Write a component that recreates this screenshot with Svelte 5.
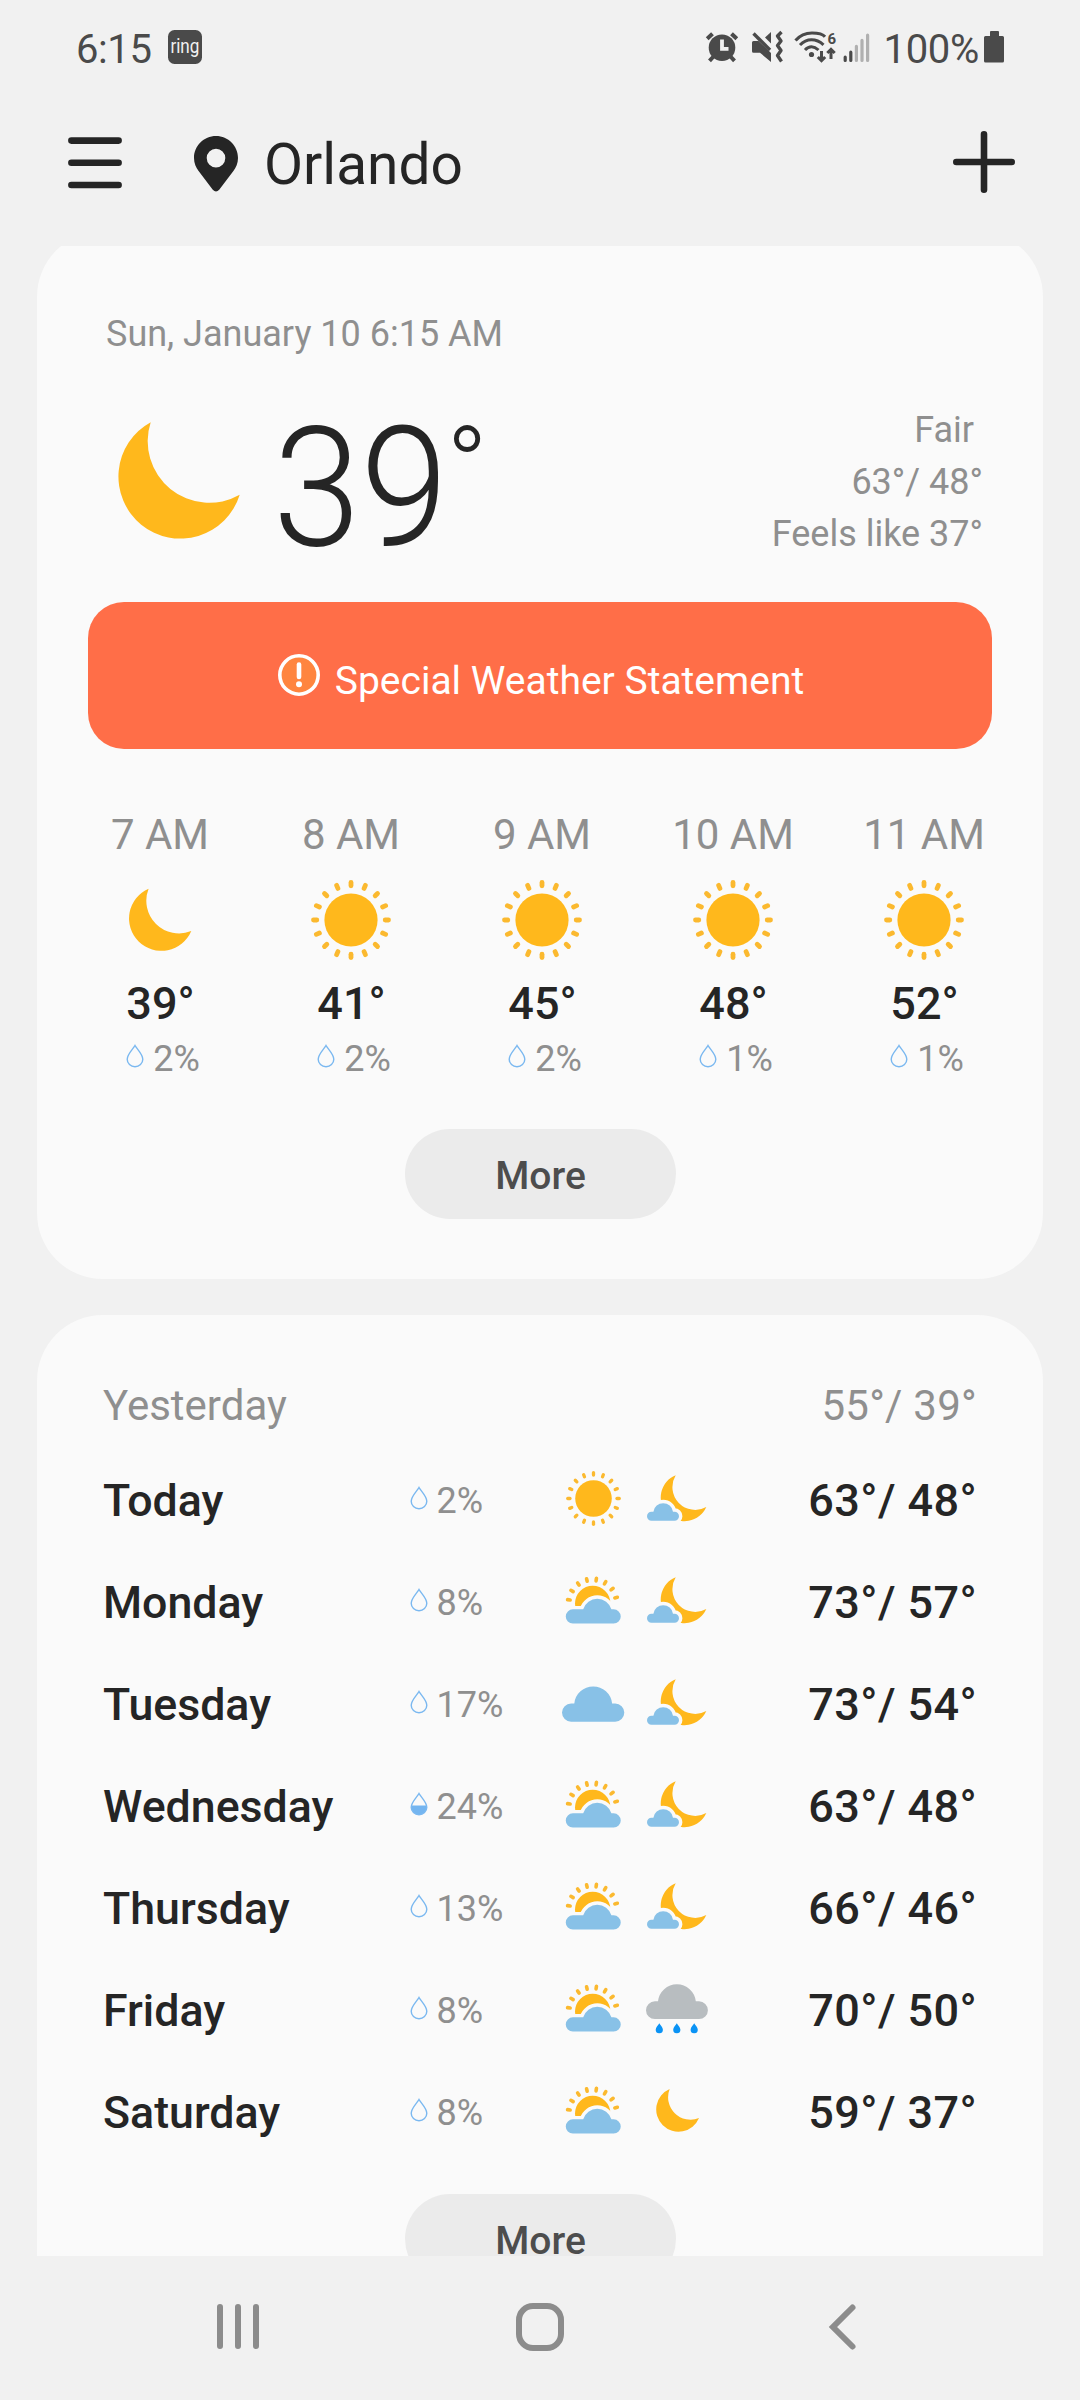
<script>
  // Hourly strip: label, icon, temperature, chance of rain
  const hours = [
    { label: '7 AM', icon: 'moon', temp: 39, pop: 2 },
    { label: '8 AM', icon: 'sun', temp: 41, pop: 2 },
    { label: '9 AM', icon: 'sun', temp: 45, pop: 2 },
    { label: '10 AM', icon: 'sun', temp: 48, pop: 1 },
    { label: '11 AM', icon: 'sun', temp: 52, pop: 1 },
  ];

  const days = [
    { name: 'Today', pop: 2, day: 'sun', night: 'moonCloud', hi: 63, lo: 48 },
    { name: 'Monday', pop: 8, day: 'sunCloud', night: 'moonCloud', hi: 73, lo: 57 },
    { name: 'Tuesday', pop: 17, day: 'cloud', night: 'moonCloud', hi: 73, lo: 54 },
    { name: 'Wednesday', pop: 24, day: 'sunCloud', night: 'moonCloud', hi: 63, lo: 48 },
    { name: 'Thursday', pop: 13, day: 'sunCloud', night: 'moonCloud', hi: 66, lo: 46 },
    { name: 'Friday', pop: 8, day: 'sunCloud', night: 'rain', hi: 70, lo: 50 },
    { name: 'Saturday', pop: 8, day: 'sunCloud', night: 'moon', hi: 59, lo: 37 },
  ];

  const rays = Array.from({ length: 16 }, (_, i) => i * 22.5);
  const halfRays = Array.from({ length: 8 }, (_, i) => -81.5 + i * 22.5);
  const rainX = [15.3, 32.8, 50.2];

  // the drop is half filled from 20% up
  const HALF_DROP = 20;
</script>

{#snippet drop(pop)}
  <svg class="drop" width="18" height="24" viewBox="0 0 18 24">
    {#if pop >= HALF_DROP}
      <path class="drop-fill" d="M1.2 13.5H16.8V15A7.8 7.8 0 0 1 1.2 15Z" />
    {/if}
    <path class="drop-line" d="M9 1.5C7.2 4.8 1.2 10.4 1.2 15.2a7.8 7.6 0 0 0 15.6 0C16.8 10.4 10.8 4.8 9 1.5Z" />
  </svg>
{/snippet}

{#snippet round(icon, size)}
  <svg width={size} height={size} viewBox="0 0 80 80">
    {#if icon === 'sun'}
      <circle class="gold" cx="40" cy="40" r="26.6" />
      {#each rays as a}
        <path class="ray" stroke-width="4.8" d="M40 2.5V5.8" transform="rotate({a} 40 40)" />
      {/each}
    {:else}
      <path class="gold" d="M28.6 8.7A32.7 32.7 0 0 0 71.3 51A32.4 32.4 0 1 1 28.6 8.7Z" />
    {/if}
  </svg>
{/snippet}

{#snippet weather(icon)}
  {#if icon === 'sun' || icon === 'moon'}
    {@render round(icon, 55)}
  {:else}
    <svg width="66" height="54" viewBox="0 0 66 54">
      {#if icon === 'sunCloud'}
        <circle class="gold" cx="32.7" cy="30.4" r="17.7" />
        {#each halfRays as a}
          <path class="ray" stroke-width="3.6" d="M32.7 5V7.6" transform="rotate({a} 32.7 30.4)" />
        {/each}
        <path class="sky gap" d="M12.9 50.6a7.15 7.15 0 0 1 0-14.3H23.2A14.7 14.7 0 0 1 51.4 36.3H53.6a7.15 7.15 0 0 1 0 14.3Z" />
      {:else if icon === 'moonCloud'}
        <path class="gold" d="M31.7 4.3A22.8 22.8 0 0 0 62.3 36A23.8 23.8 0 1 1 31.7 4.3Z" />
        <path class="sky gap" d="M7.5 49.7a4.5 4.5 0 0 1 0-9H9.4A9.9 9.9 0 0 1 29 40.7H30.5a4.5 4.5 0 0 1 0 9Z" />
      {:else if icon === 'cloud'}
        <path class="sky" d="M11.1 46.7a9.1 9.1 0 0 1 0-18.2H14.3A19 19 0 0 1 52.1 28.5H55.2a9.1 9.1 0 0 1 0 18.2Z" />
      {:else}
        <path class="grey" d="M10.9 38.1a8.9 8.9 0 0 1 0-17.8H14A19 19 0 0 1 51.8 20.3H55a8.9 8.9 0 0 1 0 17.8Z" />
        {#each rainX as x}
          <path class="rain" d="M{x} 42.2c-1 2-3.6 4-3.6 6.5a3.6 3.6 0 0 0 7.2 0c0-2.5-2.6-4.5-3.6-6.5Z" />
        {/each}
      {/if}
    </svg>
  {/if}
{/snippet}

<div class="phone">
  <div class="status">
    <span class="clock">6:15</span>
    <svg class="ring" width="34" height="34" viewBox="0 0 34 34">
      <rect width="34" height="34" rx="6.5" fill="#4a4a4a" />
      <text x="2.4" y="22.8" textLength="29" lengthAdjust="spacingAndGlyphs">ring</text>
    </svg>

    <svg class="tray" width="168" height="36" viewBox="704 29 168 36">
      <!-- alarm -->
      <g class="ink">
        <circle cx="722" cy="47.7" r="13.3" />
        <path class="line" stroke-width="4" d="M707.2 38.8L712.5 33.7M736.8 38.8L731.5 33.7" />
        <path class="line" stroke-width="4" d="M713.5 56.5L709.5 60.8M730.5 56.5L734.5 60.8" />
        <path d="M722 39.5V48.8H728.5" fill="none" stroke="#f1f1f1" stroke-width="3.8" />
      </g>
      <!-- sound off, vibrate -->
      <g class="ink">
        <path d="M752 42.5Q752 41 753.5 41H758.5L771 53V62L760 52.7H753.5Q752 52.7 752 51.2Z" />
        <path d="M771 32V43.5L765 37.5Z" />
        <path class="line" stroke-width="3.4" d="M753.5 33.5L770 50" />
        <path class="line" stroke-width="3.4" stroke-linejoin="round" d="M781.5 32L777.5 36L781 41L777.5 45.5L781 50.5L777.5 55.5L781.5 61.5" />
      </g>
      <!-- wifi 6 -->
      <g class="ink">
        <path class="line" stroke-width="3" d="M795.5 40.5Q802 33 812 33T825 36.8" />
        <path class="line" stroke-width="3" d="M800 45Q805 39.8 811.5 39.8T823.5 44.8" />
        <path class="line" stroke-width="3" d="M805 50Q808 46.8 811.5 46.8T818.5 50" />
        <circle cx="811.5" cy="54.5" r="2.6" />
        <path class="line" stroke-width="3" d="M821.5 51V60M817.8 57L821.5 60.7L825.2 57" />
        <path class="line" stroke-width="3" d="M831 59V50M827.3 53L831 49.3L834.7 53" />
        <text class="gen" x="827.4" y="43.5">6</text>
      </g>
      <!-- signal: two of five bars -->
      <path class="line" stroke-width="3.2" stroke-linecap="round" d="M845.2 57.2V60.5M850.8 52.2V60.5" />
      <path class="line faint" stroke-width="3.2" stroke-linecap="round" d="M856.4 46.4V60.5M862 40.4V60.5M867.6 35.2V60.5" />
    </svg>
    <span class="charge">100%</span>
    <svg width="20" height="32" viewBox="0 0 20 32">
      <path class="ink" d="M6 1Q6 0 7 0H14Q15 0 15 1V5H18.5Q20 5 20 6.5V30Q20 31.5 18.5 31.5H1.5Q0 31.5 0 30V6.5Q0 5 1.5 5H6Z" />
    </svg>
  </div>

  <header class="bar">
    <svg width="54" height="52" viewBox="0 0 54 52">
      <path class="stroke" d="M3.4 3.6H50.6M3.4 25.8H50.6M3.4 48H50.6" />
    </svg>
    <svg class="pin" width="44" height="56" viewBox="0 0 44 56">
      <path fill="#252525" fill-rule="evenodd" d="M22 0C9.8 0 0 9.8 0 22C0 27.5 2 31.3 4.6 35L18.8 53.8Q22 57.2 25.2 53.8L39.4 35C42 31.3 44 27.5 44 22C44 9.8 34.2 0 22 0ZM22 12.8a9.3 9.3 0 1 1 0 18.6a9.3 9.3 0 0 1 0-18.6Z" />
    </svg>
    <h1>Orlando</h1>
    <svg class="plus" width="62" height="62" viewBox="0 0 62 62">
      <path class="stroke" d="M31 3.3V58.7M3.3 31H58.7" />
    </svg>
  </header>

  <main>
    <section class="card now">
      <div class="date">Sun, January 10 6:15 AM</div>
      <div class="current">
        <svg width="122" height="117" viewBox="0 0 122 117">
          <path class="gold" d="M32.7 .2A61.6 61.6 0 0 0 121.7 72.8A62 62 0 1 1 32.7 .2Z" />
        </svg>
        <div class="big">39</div>
        <div class="deg">°</div>
        <div class="detail">
          <div>Fair&nbsp;</div>
          <div>63°/ 48°</div>
          <div>Feels like 37°</div>
        </div>
      </div>

      <div class="alert">
        <svg width="42" height="42" viewBox="0 0 42 42">
          <circle cx="21" cy="21" r="19.2" fill="#ff853f" stroke="#fff" stroke-width="3.6" />
          <path d="M21 10.5V23" stroke="#fff" stroke-width="4.6" stroke-linecap="round" />
          <circle cx="21" cy="30.3" r="3" fill="#fff" />
        </svg>
        <span>Special Weather Statement</span>
      </div>

      <div class="hours">
        {#each hours as h}
          <div class="hour">
            <div class="label">{h.label}</div>
            {@render round(h.icon, 80)}
            <div class="temp">{h.temp}°</div>
            <div class="pop">{@render drop(h.pop)}{h.pop}%</div>
          </div>
        {/each}
      </div>
      <button class="more">More</button>
    </section>

    <section class="card week">
      <div class="yesterday"><span>Yesterday</span><span class="range">55°/ 39°</span></div>
      {#each days as d}
        <div class="day">
          <span class="name">{d.name}</span>
          <span class="pop">{@render drop(d.pop)}{d.pop}%</span>
          <span class="icon">{@render weather(d.day)}</span>
          <span class="icon">{@render weather(d.night)}</span>
          <span class="range">{d.hi}°/ {d.lo}°</span>
        </div>
      {/each}
      <button class="more">More</button>
    </section>
  </main>

  <nav>
    <svg width="48" height="48" viewBox="0 0 48 48">
      <path d="M6 4V43M24 4V43M42 4V43" />
    </svg>
    <svg width="48" height="48" viewBox="0 0 48 48">
      <rect x="3" y="3" width="42" height="42" rx="14" />
    </svg>
    <svg width="48" height="48" viewBox="0 0 48 48">
      <path d="M34.5 4.5L15 24L34.5 43.5" />
    </svg>
  </nav>
</div>

<style>
  :global(body) { background: #f1f1f1; }

  .phone {
    width: 1080px;
    height: 2400px;
    display: flex;
    flex-direction: column;
    background: #f1f1f1;
    color: #252525;
    font-family: Roboto, sans-serif;
    overflow: hidden;
  }
  svg { display: block; flex: none; }

  /* icon paint */
  .gold { fill: #ffb81c; }
  .ray { stroke: #fbb92f; stroke-linecap: round; }
  .sky { fill: #88c1e7; }
  .grey { fill: #b8bdc0; }
  .rain { fill: #0a93f5; }
  .gap { stroke: #fafafa; stroke-width: 6.8px; paint-order: stroke; }
  .drop-line { fill: none; stroke: #7ab8f0; stroke-width: 1.4px; }
  .drop-fill { fill: #74b5f0; }
  .ink { fill: #4a4a4a; }
  .line { fill: none; stroke: #4a4a4a; }
  .faint { stroke: #b0b0b0; }
  .stroke { fill: none; stroke: #252525; stroke-width: 6.6px; stroke-linecap: round; }

  .status {
    height: 98px;
    padding: 0 76px;
    display: flex;
    align-items: center;
    box-sizing: border-box;
    font-size: 40px;
    color: #4a4a4a;
  }
  .clock { letter-spacing: -0.4px; }
  .ring { margin: 0 auto 4px 16px; overflow: visible; }
  .ring text { font-size: 21px; fill: #f1f1f1; }
  .gen { font-size: 15px; font-weight: 700; }
  .tray { margin-bottom: 4px; }
  .charge { margin: 0 5px 0 11px; letter-spacing: -0.3px; }
  .charge + svg { margin-bottom: 4px; }

  .bar {
    height: 129px;
    margin-bottom: 19px;
    padding: 0 65px 0 68px;
    display: flex;
    align-items: center;
  }
  .pin { margin: 2px 26px 0 72px; }
  h1 { margin: 4px 0 0; font-size: 56.8px; font-weight: 400; line-height: 70px; }
  .plus { margin: 0 0 1px auto; }

  main {
    height: 2010px;
    padding: 0 37px;
    overflow: hidden;
  }
  .card {
    background: #fafafa;
    border-radius: 66px;
    display: flow-root;
  }

  /* scrolled a little under the header */
  .now { height: 1048px; margin-top: -15px; }
  .date {
    margin: 81px 0 0 69px;
    font-size: 36px;
    line-height: 44px;
    color: #8f8f8f;
  }
  .current {
    height: 156px;
    margin-top: 48px;
    padding: 0 60px 0 81px;
    display: flex;
    align-items: center;
  }
  .current > svg { margin-bottom: 4px; }
  .big {
    margin: 0 -12px 0 33px;
    padding-top: 12px;
    font-size: 167px;
    font-weight: 300;
    line-height: 156px;
    transform: scaleX(0.945);
    transform-origin: left;
  }
  .deg {
    align-self: flex-start;
    margin-top: 8px;
    font-size: 110px;
    font-weight: 300;
    line-height: 110px;
  }
  .detail {
    margin-left: auto;
    font-size: 36px;
    line-height: 52px;
    text-align: right;
    color: #8f8f8f;
  }

  .alert {
    height: 147px;
    margin: 42px 51px 0;
    padding-left: 2px;
    border-radius: 36px;
    display: flex;
    align-items: center;
    justify-content: center;
    gap: 15px;
    background: #ff6e48;
    color: #fff;
    font-size: 39px;
  }
  .alert svg { margin-bottom: 1px; }
  .alert span { padding-top: 11px; }

  .hours {
    display: flex;
    margin: 61px 0 49px 27px;
  }
  .hour {
    width: 191px;
    display: flex;
    flex-direction: column;
    align-items: center;
  }
  .label {
    margin-bottom: 20px;
    padding-left: 1px;
    font-size: 42px;
    line-height: 50px;
    color: #8f8f8f;
  }
  .temp {
    margin: 18px 0 8px;
    padding-left: 2px;
    font-size: 45px;
    font-weight: 500;
    line-height: 52px;
  }
  .pop {
    display: flex;
    align-items: center;
    gap: 9px;
    font-size: 36px;
    font-weight: 400;
    line-height: 42px;
    color: #8f8f8f;
  }
  .hour .pop { padding-left: 7px; }
  .drop { margin-bottom: 6px; }

  .more {
    display: block;
    width: 271px;
    height: 90px;
    margin: 0 auto;
    padding: 4px 0 0 1px;
    border: none;
    border-radius: 45px;
    background: #ebebeb;
    color: #4d4d4d;
    font: 500 39px Roboto, sans-serif;
  }

  .week {
    height: 1100px;
    margin-top: 36px;
    padding: 47px 66px 0;
  }
  .yesterday {
    height: 87px;
    display: flex;
    align-items: center;
    justify-content: space-between;
    font-size: 42px;
    color: #8f8f8f;
  }
  .day {
    height: 102px;
    display: grid;
    grid-template-columns: 307px 150px 66px 84px 1fr;
    align-items: center;
    font-size: 45px;
    font-weight: 500;
  }
  .name { padding-top: 2px; font-size: 44.7px; }
  .day .pop { padding-top: 2px; gap: 8.5px; }
  .icon {
    display: flex;
    justify-content: center;
    padding-bottom: 4px;
  }
  .icon + .icon { padding-left: 18px; }
  .range { text-align: right; letter-spacing: 0.4px; }
  .yesterday .range { letter-spacing: 0.25px; }
  .week .more { margin-top: 31px; }

  nav {
    flex: 1;
    padding: 0 214px 2px;
    display: flex;
    align-items: center;
    justify-content: space-between;
  }
  nav svg { fill: none; stroke: #8c8c8c; stroke-width: 6px; stroke-linecap: round; }
</style>
